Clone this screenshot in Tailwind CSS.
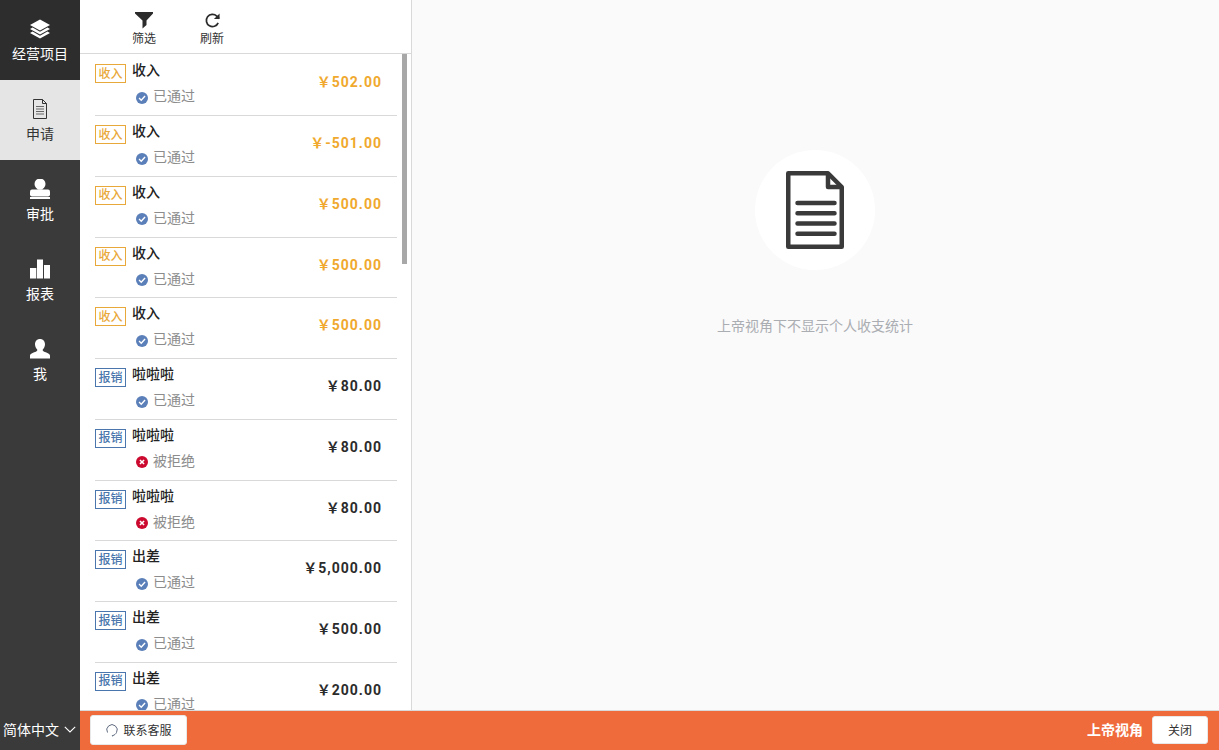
<!DOCTYPE html>
<html lang="zh-CN">
<head>
  <meta charset="UTF-8" />
  <title>申请</title>
  <script src="https://cdn.jsdelivr.net/npm/@tailwindcss/browser@4"></script>
</head>
<body class="h-[750px] w-[1219px] overflow-hidden bg-[#fafafa] font-['Noto_Sans_CJK_SC','Liberation_Sans',sans-serif]">
  <div class="flex h-[750px]">
    <!-- sidebar -->
    <aside class="flex w-[80px] shrink-0 flex-col bg-[#3a3a3a] text-[14px] text-white">
      <a class="flex h-[80px] flex-col items-center bg-[#2d2d2d] pt-[19px]">
        <svg class="h-[20px] w-[20px]" viewBox="0 0 20 20" fill="#fff"><path d="M10 .5 20 6l-10 5.500L0 6z"/><path d="M2.600 8.600 10 12.700l7.400-4.100L20 10l-10 5.500L0 10z"/><path d="M2.600 12.600 10 16.700l7.400-4.100L20 14l-10 5.500L0 14z"/></svg>
        <span class="mt-[4px] whitespace-nowrap leading-[20px]">经营项目</span>
      </a>
      <a class="flex h-[80px] flex-col items-center bg-[#e5e5e5] pt-[19px] text-[#333]">
        <svg class="h-[20px] w-[16px]" viewBox="0 0 16 20" fill="none" stroke="#333"><path d="M1.500.5h9l4 4v15h-13z"/><path d="M10.500.5v4h4"/><path d="M4 7.500h8M4 10h8M4 12.500h8M4 15h8" stroke="#666" stroke-width="1.200"/></svg>
        <span class="mt-[4px] leading-[20px]">申请</span>
      </a>
      <a class="flex h-[80px] flex-col items-center pt-[19px]">
        <svg class="h-[20px] w-[20px]" viewBox="0 0 20 20" fill="#fff"><circle cx="10" cy="5" r="5.500"/><path d="M7.500 8h5v2.500H7.500z"/><rect y="10.500" width="20" height="7" rx="2"/><rect y="18" width="20" height="2"/></svg>
        <span class="mt-[4px] leading-[20px]">审批</span>
      </a>
      <a class="flex h-[80px] flex-col items-center pt-[19px]">
        <svg class="h-[20px] w-[20px]" viewBox="0 0 20 20" fill="#fff"><rect y="9" width="6.300" height="10.500"/><rect x="7" y=".5" width="6" height="19"/><rect x="14" y="6" width="6" height="13.500"/></svg>
        <span class="mt-[4px] leading-[20px]">报表</span>
      </a>
      <a class="flex h-[80px] flex-col items-center pt-[19px]">
        <svg class="h-[20px] w-[20px]" viewBox="0 0 20 20" fill="#fff"><path d="M10 0c3 0 5 2.200 5 5.300 0 2.200-1 4-2.200 5.100-.4.800 0 1.500 1 2 2.600 1.100 6.200 2.100 6.200 4.300V19.500H0v-2.800c0-2.200 3.600-3.200 6.200-4.300 1-.5 1.400-1.200 1-2C6 9.300 5 7.500 5 5.300 5 2.200 7 0 10 0z"/></svg>
        <span class="mt-[4px] leading-[20px]">我</span>
      </a>
      <div class="mt-auto mb-[2px] flex h-[38px] items-center pl-[3px] text-[14px]">
        <span class="whitespace-nowrap">简体中文</span>
        <svg class="ml-[5px] h-[7px] w-[12px] shrink-0" viewBox="0 0 12 7" fill="none" stroke="#fff" stroke-width="1.100"><path d="M.8.8 6 6l5.200-5.200"/></svg>
      </div>
    </aside>

    <div class="flex min-w-0 flex-1 flex-col">
      <div class="flex min-h-0 flex-1">
        <!-- list panel -->
        <section class="flex w-[332px] shrink-0 flex-col border-r border-[#d9d9d9] bg-white">
          <div class="flex h-[54px] shrink-0 border-b border-[#d9d9d9] pl-[52px] text-[12px] text-[#333]">
            <button class="flex w-[24px] flex-col items-center pt-[12px]">
              <svg class="h-[17px] w-[18px]" viewBox="0 0 18 17" fill="#2b2b2b"><path d="M0 0H18V1.500L11.500 8.500V13L7.500 16.500V8.500L0 1.500Z"/></svg>
              <span class="whitespace-nowrap leading-[17px]">筛选</span>
            </button>
            <button class="ml-[44px] flex w-[24px] flex-col items-center pt-[12px]">
              <svg class="h-[17px] w-[17px]" viewBox="0 0 18 18" fill="none" stroke="#2b2b2b" stroke-width="1.800"><path d="M15 11.500A6.500 6.500 0 1 1 13.500 4.300L16 7"/><path d="M16.500 1.500V7.500H10.500" fill="#2b2b2b" stroke="none"/></svg>
              <span class="whitespace-nowrap leading-[17px]">刷新</span>
            </button>
          </div>
          <div class="relative min-h-0 flex-1 overflow-hidden">
            <div class="absolute right-[4px] top-0 h-[210px] w-[5px] bg-[#a8a8a8]"></div>
            <ul class="pl-[15px] pr-[14px] pt-[1.250px]">
              <li class="flex h-[60.750px] items-start border-b border-[#d9d9d9]">
                <span class="mt-[9px] flex h-[19px] w-[31px] shrink-0 items-center justify-center border border-[#e9a93a] pb-[2px] text-[12px] font-medium leading-none text-[#e9a93a]">收入</span>
                <div class="ml-[6px] min-w-0 flex-1">
                  <p class="mt-[5px] text-[14px] font-medium leading-[19px] text-[#222]">收入</p>
                  <p class="mt-[7px] flex items-center pl-[4px] text-[14px] leading-[19px] text-[#8c8c8c]"><svg class="mr-[5px] mt-[4px] h-[12px] w-[12px]" viewBox="0 0 11 11"><circle cx="5.500" cy="5.500" r="5.500" fill="#5b7fb8"/><path d="M2.800 5.600 4.800 7.500 8.300 3.700" fill="none" stroke="#fff" stroke-width="1.300"/></svg>已通过</p>
                </div>
                <span class="mr-[15px] mt-[17px] font-['Roboto','Noto_Sans_CJK_SC',sans-serif] text-[14px] font-bold leading-[20px] tracking-[1px] text-[#f0a92e]">&#xFFE5;502.00</span>
              </li>
              <li class="flex h-[60.750px] items-start border-b border-[#d9d9d9]">
                <span class="mt-[9px] flex h-[19px] w-[31px] shrink-0 items-center justify-center border border-[#e9a93a] pb-[2px] text-[12px] font-medium leading-none text-[#e9a93a]">收入</span>
                <div class="ml-[6px] min-w-0 flex-1">
                  <p class="mt-[5px] text-[14px] font-medium leading-[19px] text-[#222]">收入</p>
                  <p class="mt-[7px] flex items-center pl-[4px] text-[14px] leading-[19px] text-[#8c8c8c]"><svg class="mr-[5px] mt-[4px] h-[12px] w-[12px]" viewBox="0 0 11 11"><circle cx="5.500" cy="5.500" r="5.500" fill="#5b7fb8"/><path d="M2.800 5.600 4.800 7.500 8.300 3.700" fill="none" stroke="#fff" stroke-width="1.300"/></svg>已通过</p>
                </div>
                <span class="mr-[15px] mt-[17px] font-['Roboto','Noto_Sans_CJK_SC',sans-serif] text-[14px] font-bold leading-[20px] tracking-[1px] text-[#f0a92e]">&#xFFE5;-501.00</span>
              </li>
              <li class="flex h-[60.750px] items-start border-b border-[#d9d9d9]">
                <span class="mt-[9px] flex h-[19px] w-[31px] shrink-0 items-center justify-center border border-[#e9a93a] pb-[2px] text-[12px] font-medium leading-none text-[#e9a93a]">收入</span>
                <div class="ml-[6px] min-w-0 flex-1">
                  <p class="mt-[5px] text-[14px] font-medium leading-[19px] text-[#222]">收入</p>
                  <p class="mt-[7px] flex items-center pl-[4px] text-[14px] leading-[19px] text-[#8c8c8c]"><svg class="mr-[5px] mt-[4px] h-[12px] w-[12px]" viewBox="0 0 11 11"><circle cx="5.500" cy="5.500" r="5.500" fill="#5b7fb8"/><path d="M2.800 5.600 4.800 7.500 8.300 3.700" fill="none" stroke="#fff" stroke-width="1.300"/></svg>已通过</p>
                </div>
                <span class="mr-[15px] mt-[17px] font-['Roboto','Noto_Sans_CJK_SC',sans-serif] text-[14px] font-bold leading-[20px] tracking-[1px] text-[#f0a92e]">&#xFFE5;500.00</span>
              </li>
              <li class="flex h-[60.750px] items-start border-b border-[#d9d9d9]">
                <span class="mt-[9px] flex h-[19px] w-[31px] shrink-0 items-center justify-center border border-[#e9a93a] pb-[2px] text-[12px] font-medium leading-none text-[#e9a93a]">收入</span>
                <div class="ml-[6px] min-w-0 flex-1">
                  <p class="mt-[5px] text-[14px] font-medium leading-[19px] text-[#222]">收入</p>
                  <p class="mt-[7px] flex items-center pl-[4px] text-[14px] leading-[19px] text-[#8c8c8c]"><svg class="mr-[5px] mt-[4px] h-[12px] w-[12px]" viewBox="0 0 11 11"><circle cx="5.500" cy="5.500" r="5.500" fill="#5b7fb8"/><path d="M2.800 5.600 4.800 7.500 8.300 3.700" fill="none" stroke="#fff" stroke-width="1.300"/></svg>已通过</p>
                </div>
                <span class="mr-[15px] mt-[17px] font-['Roboto','Noto_Sans_CJK_SC',sans-serif] text-[14px] font-bold leading-[20px] tracking-[1px] text-[#f0a92e]">&#xFFE5;500.00</span>
              </li>
              <li class="flex h-[60.750px] items-start border-b border-[#d9d9d9]">
                <span class="mt-[9px] flex h-[19px] w-[31px] shrink-0 items-center justify-center border border-[#e9a93a] pb-[2px] text-[12px] font-medium leading-none text-[#e9a93a]">收入</span>
                <div class="ml-[6px] min-w-0 flex-1">
                  <p class="mt-[5px] text-[14px] font-medium leading-[19px] text-[#222]">收入</p>
                  <p class="mt-[7px] flex items-center pl-[4px] text-[14px] leading-[19px] text-[#8c8c8c]"><svg class="mr-[5px] mt-[4px] h-[12px] w-[12px]" viewBox="0 0 11 11"><circle cx="5.500" cy="5.500" r="5.500" fill="#5b7fb8"/><path d="M2.800 5.600 4.800 7.500 8.300 3.700" fill="none" stroke="#fff" stroke-width="1.300"/></svg>已通过</p>
                </div>
                <span class="mr-[15px] mt-[17px] font-['Roboto','Noto_Sans_CJK_SC',sans-serif] text-[14px] font-bold leading-[20px] tracking-[1px] text-[#f0a92e]">&#xFFE5;500.00</span>
              </li>
              <li class="flex h-[60.750px] items-start border-b border-[#d9d9d9]">
                <span class="mt-[9px] flex h-[19px] w-[31px] shrink-0 items-center justify-center border border-[#4a76ad] pb-[2px] text-[12px] font-medium leading-none text-[#4a76ad]">报销</span>
                <div class="ml-[6px] min-w-0 flex-1">
                  <p class="mt-[5px] text-[14px] font-medium leading-[19px] text-[#222]">啦啦啦</p>
                  <p class="mt-[7px] flex items-center pl-[4px] text-[14px] leading-[19px] text-[#8c8c8c]"><svg class="mr-[5px] mt-[4px] h-[12px] w-[12px]" viewBox="0 0 11 11"><circle cx="5.500" cy="5.500" r="5.500" fill="#5b7fb8"/><path d="M2.800 5.600 4.800 7.500 8.300 3.700" fill="none" stroke="#fff" stroke-width="1.300"/></svg>已通过</p>
                </div>
                <span class="mr-[15px] mt-[17px] font-['Roboto','Noto_Sans_CJK_SC',sans-serif] text-[14px] font-bold leading-[20px] tracking-[1px] text-[#2b2b2b]">&#xFFE5;80.00</span>
              </li>
              <li class="flex h-[60.750px] items-start border-b border-[#d9d9d9]">
                <span class="mt-[9px] flex h-[19px] w-[31px] shrink-0 items-center justify-center border border-[#4a76ad] pb-[2px] text-[12px] font-medium leading-none text-[#4a76ad]">报销</span>
                <div class="ml-[6px] min-w-0 flex-1">
                  <p class="mt-[5px] text-[14px] font-medium leading-[19px] text-[#222]">啦啦啦</p>
                  <p class="mt-[7px] flex items-center pl-[4px] text-[14px] leading-[19px] text-[#8c8c8c]"><svg class="mr-[5px] mt-[4px] h-[12px] w-[12px]" viewBox="0 0 11 11"><circle cx="5.500" cy="5.500" r="5.500" fill="#cc0a2f"/><path d="M3.600 3.600 7.400 7.400M7.400 3.600 3.600 7.400" fill="none" stroke="#fff" stroke-width="1.400"/></svg>被拒绝</p>
                </div>
                <span class="mr-[15px] mt-[17px] font-['Roboto','Noto_Sans_CJK_SC',sans-serif] text-[14px] font-bold leading-[20px] tracking-[1px] text-[#2b2b2b]">&#xFFE5;80.00</span>
              </li>
              <li class="flex h-[60.750px] items-start border-b border-[#d9d9d9]">
                <span class="mt-[9px] flex h-[19px] w-[31px] shrink-0 items-center justify-center border border-[#4a76ad] pb-[2px] text-[12px] font-medium leading-none text-[#4a76ad]">报销</span>
                <div class="ml-[6px] min-w-0 flex-1">
                  <p class="mt-[5px] text-[14px] font-medium leading-[19px] text-[#222]">啦啦啦</p>
                  <p class="mt-[7px] flex items-center pl-[4px] text-[14px] leading-[19px] text-[#8c8c8c]"><svg class="mr-[5px] mt-[4px] h-[12px] w-[12px]" viewBox="0 0 11 11"><circle cx="5.500" cy="5.500" r="5.500" fill="#cc0a2f"/><path d="M3.600 3.600 7.400 7.400M7.400 3.600 3.600 7.400" fill="none" stroke="#fff" stroke-width="1.400"/></svg>被拒绝</p>
                </div>
                <span class="mr-[15px] mt-[17px] font-['Roboto','Noto_Sans_CJK_SC',sans-serif] text-[14px] font-bold leading-[20px] tracking-[1px] text-[#2b2b2b]">&#xFFE5;80.00</span>
              </li>
              <li class="flex h-[60.750px] items-start border-b border-[#d9d9d9]">
                <span class="mt-[9px] flex h-[19px] w-[31px] shrink-0 items-center justify-center border border-[#4a76ad] pb-[2px] text-[12px] font-medium leading-none text-[#4a76ad]">报销</span>
                <div class="ml-[6px] min-w-0 flex-1">
                  <p class="mt-[5px] text-[14px] font-medium leading-[19px] text-[#222]">出差</p>
                  <p class="mt-[7px] flex items-center pl-[4px] text-[14px] leading-[19px] text-[#8c8c8c]"><svg class="mr-[5px] mt-[4px] h-[12px] w-[12px]" viewBox="0 0 11 11"><circle cx="5.500" cy="5.500" r="5.500" fill="#5b7fb8"/><path d="M2.800 5.600 4.800 7.500 8.300 3.700" fill="none" stroke="#fff" stroke-width="1.300"/></svg>已通过</p>
                </div>
                <span class="mr-[15px] mt-[17px] font-['Roboto','Noto_Sans_CJK_SC',sans-serif] text-[14px] font-bold leading-[20px] tracking-[1px] text-[#2b2b2b]">&#xFFE5;5,000.00</span>
              </li>
              <li class="flex h-[60.750px] items-start border-b border-[#d9d9d9]">
                <span class="mt-[9px] flex h-[19px] w-[31px] shrink-0 items-center justify-center border border-[#4a76ad] pb-[2px] text-[12px] font-medium leading-none text-[#4a76ad]">报销</span>
                <div class="ml-[6px] min-w-0 flex-1">
                  <p class="mt-[5px] text-[14px] font-medium leading-[19px] text-[#222]">出差</p>
                  <p class="mt-[7px] flex items-center pl-[4px] text-[14px] leading-[19px] text-[#8c8c8c]"><svg class="mr-[5px] mt-[4px] h-[12px] w-[12px]" viewBox="0 0 11 11"><circle cx="5.500" cy="5.500" r="5.500" fill="#5b7fb8"/><path d="M2.800 5.600 4.800 7.500 8.300 3.700" fill="none" stroke="#fff" stroke-width="1.300"/></svg>已通过</p>
                </div>
                <span class="mr-[15px] mt-[17px] font-['Roboto','Noto_Sans_CJK_SC',sans-serif] text-[14px] font-bold leading-[20px] tracking-[1px] text-[#2b2b2b]">&#xFFE5;500.00</span>
              </li>
              <li class="flex h-[60.750px] items-start border-b border-[#d9d9d9]">
                <span class="mt-[9px] flex h-[19px] w-[31px] shrink-0 items-center justify-center border border-[#4a76ad] pb-[2px] text-[12px] font-medium leading-none text-[#4a76ad]">报销</span>
                <div class="ml-[6px] min-w-0 flex-1">
                  <p class="mt-[5px] text-[14px] font-medium leading-[19px] text-[#222]">出差</p>
                  <p class="mt-[7px] flex items-center pl-[4px] text-[14px] leading-[19px] text-[#8c8c8c]"><svg class="mr-[5px] mt-[4px] h-[12px] w-[12px]" viewBox="0 0 11 11"><circle cx="5.500" cy="5.500" r="5.500" fill="#5b7fb8"/><path d="M2.800 5.600 4.800 7.500 8.300 3.700" fill="none" stroke="#fff" stroke-width="1.300"/></svg>已通过</p>
                </div>
                <span class="mr-[15px] mt-[17px] font-['Roboto','Noto_Sans_CJK_SC',sans-serif] text-[14px] font-bold leading-[20px] tracking-[1px] text-[#2b2b2b]">&#xFFE5;200.00</span>
              </li>
            </ul>
          </div>
        </section>

        <!-- empty detail -->
        <main class="flex flex-1 flex-col items-center bg-[#fafafa] pr-[1px] pt-[150px]">
          <div class="flex h-[120px] w-[120px] items-center justify-center rounded-full bg-white">
            <svg class="h-[78px] w-[58px]" viewBox="0 0 58 78" fill="none" stroke="#3a3a3a" stroke-linejoin="round" stroke-width="4.500"><path d="M2.250 2.250H42L55.750 16V75.750H2.250Z"/><path d="M42 3V16H55.750"/><path d="M11.500 32H48.500M11.500 42.200H48.500M11.500 52.500H48.500M11.500 62.700H48.500" stroke-linecap="round"/></svg>
          </div>
          <p class="mt-[45px] text-[14px] leading-[20px] text-[#aaadb2]">上帝视角下不显示个人收支统计</p>
        </main>
      </div>

      <!-- bottom bar -->
      <footer class="flex h-[40px] shrink-0 items-center border-t border-[#d9d9d9] bg-[#f06b3c] pb-[1px] pl-[10px] pr-[11px]">
        <button class="flex h-[30px] w-[97px] items-center justify-center rounded-[3px] border border-[#e8e8e8] bg-white text-[12px] text-[#333]">
          <svg class="mr-[4px] h-[14px] w-[14px]" viewBox="0 0 14 14" fill="none" stroke="#5f6b80"><path d="M2.500 9.500A5.200 5.200 0 1 1 11.500 9.500"/><path d="M11.500 9.500C10.800 11 9.500 12 8 12.500"/><circle cx="7.500" cy="12.800" r=".7" fill="#5f6b80" stroke="none"/></svg>
          联系客服
        </button>
        <span class="ml-auto pb-[1px] text-[14px] font-bold text-white">上帝视角</span>
        <button class="ml-[9px] h-[28px] w-[56px] rounded-[3px] border border-[#e8e8e8] bg-white pb-[1px] text-[12px] text-[#333]">关闭</button>
      </footer>
    </div>
  </div>
</body>
</html>
